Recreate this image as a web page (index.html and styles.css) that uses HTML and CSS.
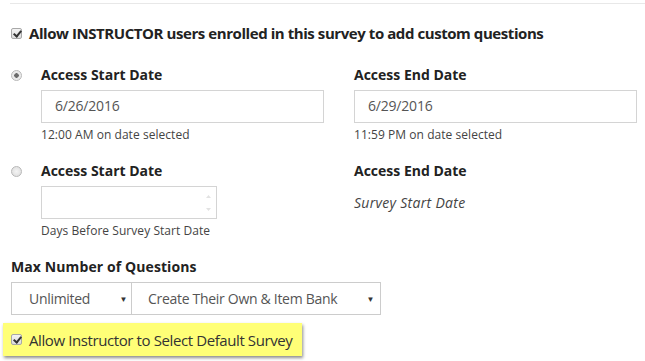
FILE: index.html
```html
<!DOCTYPE html>
<html>
<head>
<meta charset="utf-8">
<link rel="stylesheet" href="styles.css">
</head>
<body>
<div class="page">
  <hr class="rule">
  <label class="allow-row">
    <span class="cb checked"></span>
    <span class="allow-text">Allow INSTRUCTOR users enrolled in this survey to add custom questions</span>
  </label>

  <div class="date-row">
    <span class="radio selected"></span>
    <div class="col col-left">
      <div class="lbl">Access Start Date</div>
      <div class="input wide">6/26/2016</div>
      <div class="help">12:00 AM on date selected</div>
    </div>
    <div class="col col-right">
      <div class="lbl">Access End Date</div>
      <div class="input wide">6/29/2016</div>
      <div class="help">11:59 PM on date selected</div>
    </div>
  </div>

  <div class="date-row second">
    <span class="radio"></span>
    <div class="col col-left">
      <div class="lbl">Access Start Date</div>
      <div class="input narrow">
        <span class="spin">
          <svg width="7" height="24" viewBox="0 0 7 24"><path d="M1 7 L3.5 4 L6 7 Z" fill="#e2e2e2"/><path d="M1 17 L3.5 20 L6 17 Z" fill="#e2e2e2"/></svg>
        </span>
      </div>
      <div class="help">Days Before Survey Start Date</div>
    </div>
    <div class="col col-right">
      <div class="lbl">Access End Date</div>
      <div class="italic">Survey Start Date</div>
    </div>
  </div>

  <div class="max-lbl">Max Number of Questions</div>
  <div class="selects">
    <div class="select s1"><span>Unlimited</span><span class="caret">▼</span></div>
    <div class="select s2"><span>Create Their Own &amp; Item Bank</span><span class="caret">▼</span></div>
  </div>

  <div class="highlight">
    <span class="cb checked"></span>
    <span class="hl-text">Allow Instructor to Select Default Survey</span>
  </div>
</div>
</body>
</html>
```
FILE: styles.css
```css
html, body {
  margin: 0;
  padding: 0;
  background: #fff;
}
body {
  font-family: "Open Sans", "Noto Sans", sans-serif;
  color: #333;
  width: 645px;
  height: 361px;
  overflow: hidden;
}
.page {
  padding-top: 3px;
}
.rule {
  margin: 0 0 0 10px;
  border: 0;
  border-top: 1px solid #e8e8e8;
  height: 0;
}
.cb {
  display: inline-block;
  box-sizing: border-box;
  width: 11px;
  height: 11px;
  border: 1px solid #a8a8a8;
  border-radius: 2px;
  background: linear-gradient(#f4f4f4, #dcdcdc);
  position: relative;
  flex: none;
}
.cb.checked::after {
  content: "";
  position: absolute;
  left: 3px;
  top: 0px;
  width: 3px;
  height: 6px;
  border: solid #333;
  border-width: 0 2px 2px 0;
  transform: rotate(40deg);
}
.allow-row {
  display: flex;
  align-items: center;
  margin-top: 19px;
  padding-left: 11px;
  height: 20px;
}
.allow-text {
  margin-left: 7px;
  font-weight: 700;
  font-size: 15px;
  letter-spacing: -0.43px;
  color: #222;
}
.date-row {
  display: flex;
  margin-top: 23px;
  padding-left: 11px;
}
.date-row.second {
  margin-top: 19px;
}
.radio {
  box-sizing: border-box;
  width: 11px;
  height: 11px;
  border-radius: 50%;
  border: 1px solid #b8b8b8;
  background: radial-gradient(circle, #6a6a6a 0 2px, #e6e6e6 2.5px, #f2f2f2);
  margin-top: 4px;
  flex: none;
}
.date-row.second .radio {
  background: radial-gradient(circle, #f4f4f4, #dadada);
}
.col-left {
  margin-left: 19px;
  width: 313px;
}
.col-right {
  width: 283px;
}
.lbl {
  font-weight: 700;
  font-size: 14px;
  letter-spacing: 0;
  color: #222;
  line-height: 18px;
}
.input {
  box-sizing: border-box;
  height: 33px;
  border: 1px solid #d4d4d4;
  margin-top: 6px;
  padding-left: 13px;
  font-size: 14px;
  color: #555;
  line-height: 30px;
  letter-spacing: -0.2px;
}
.input.wide {
  width: 283px;
}
.input.narrow {
  width: 176px;
  display: flex;
  justify-content: flex-end;
  padding-right: 4px;
}
.spin {
  display: flex;
  align-items: center;
}
.help {
  font-size: 12px;
  color: #444;
  margin-top: 3px;
  letter-spacing: 0.05px;
}
.italic {
  font-style: italic;
  font-size: 14px;
  color: #444;
  margin-top: 13px;
  letter-spacing: 0.3px;
}
.max-lbl {
  margin-top: 18px;
  padding-left: 11px;
  font-weight: 700;
  font-size: 14px;
  letter-spacing: 0.1px;
  color: #222;
}
.selects {
  display: flex;
  margin-top: 6px;
  padding-left: 11px;
}
.select {
  box-sizing: border-box;
  height: 33px;
  border: 1px solid #ccc;
  display: flex;
  align-items: center;
  justify-content: space-between;
  font-size: 14px;
  color: #555;
  padding: 0 5px 0 17px;
  letter-spacing: -0.3px;
}
.select.s1 {
  width: 121px;
  padding-right: 4px;
}
.select.s2 {
  width: 250px;
  border-left: 1px solid #ccc;
  margin-left: -1px;
  padding-left: 16px;
  padding-right: 6px;
}
.caret {
  font-size: 8px;
  color: #333;
}
.highlight {
  display: inline-flex;
  align-items: center;
  margin-top: 8px;
  margin-left: 3px;
  width: 299px;
  height: 33px;
  box-sizing: border-box;
  padding-left: 8px;
  background: #ffff77;
  box-shadow: 1px 2px 3px rgba(0,0,0,0.45);
}
.hl-text {
  margin-left: 7px;
  font-size: 15px;
  color: #333;
  letter-spacing: -0.4px;
}
```
